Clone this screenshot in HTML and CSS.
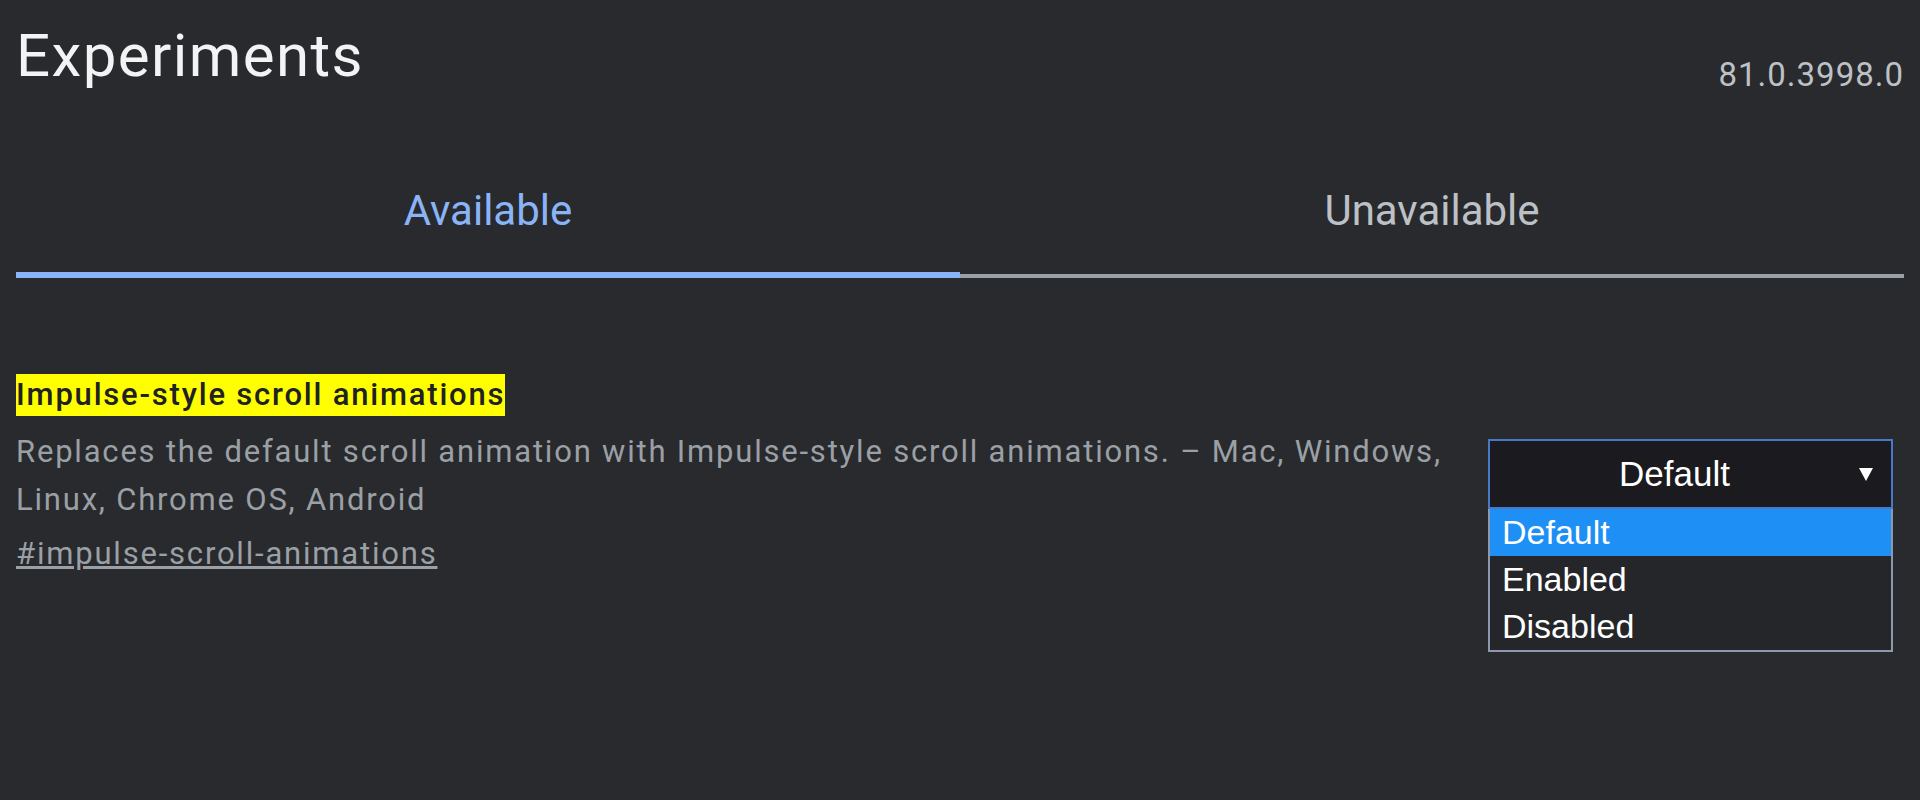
FILE: index.html
```html
<!DOCTYPE html>
<html lang="en">

<head>
    <meta charset="UTF-8">
    <meta name="viewport" content="width=device-width, initial-scale=1.0">
    <title>Experiments</title>
    <link rel="stylesheet" href="styles.css">
</head>

<body>

    <!-- Шапка -->
    <header class="header">
        <h1 class="title">Experiments</h1>
        <span class="version">81.0.3998.0</span>
    </header>

    <!-- Вкладки -->
    <nav class="tabs">
        <div class="tab tab-active">Available</div>
        <div class="tab">Unavailable</div>
    </nav>

    <!-- Эксперимент -->
    <div class="experiment">
        <div class="experiment-info">
            <h3 class="experiment-name"><span class="highlight">Impulse-style scroll animations</span></h3>
            <p class="experiment-desc">Replaces the default scroll animation with Impulse-style scroll animations. – Mac, Windows, Linux, Chrome OS, Android</p>
            <a class="experiment-link" href="#impulse-scroll-animations">#impulse-scroll-animations</a>
        </div>
        <div class="experiment-select">
            <div class="select-box">
                <span class="select-value">Default</span>
                <span class="select-arrow"></span>
            </div>
            <ul class="select-list">
                <li class="option option-selected">Default</li>
                <li class="option">Enabled</li>
                <li class="option">Disabled</li>
            </ul>
        </div>
    </div>

</body>

</html>
```

FILE: styles.css
```css
body {
    margin: 0;
    padding: 0 16px;
    background-color: #292a2d;
    font-family: 'Roboto', 'Liberation Sans', sans-serif;
    color: #e8eaed;
}

.header {
    display: flex;
    justify-content: space-between;
    align-items: flex-start;
    padding-top: 26px;
}

.title {
    margin: 0;
    font-size: 60px;
    font-weight: 400;
    line-height: 60px;
    letter-spacing: 1.4px;
    color: #f1f3f4;
}

.version {
    margin-top: 33px;
    font-size: 33px;
    line-height: 32px;
    letter-spacing: 1px;
    color: #bdc1c6;
}

.tabs {
    display: flex;
    align-items: flex-end;
}

.tab {
    flex: 1;
    text-align: center;
    font-size: 42px;
    line-height: 42px;
    padding: 99px 0 42px;
    color: #bdc1c6;
    border-bottom: 4px solid #9aa0a6;
}

.tab-active {
    color: #8ab4f8;
    padding-bottom: 40px;
    border-bottom: 6px solid #8ab4f8;
}

.experiment {
    display: flex;
    align-items: flex-start;
    margin-top: 96px;
}

.experiment-info {
    width: 1440px;
}

.experiment-name {
    margin: 0;
    font-size: 31px;
    font-weight: 500;
    line-height: 42px;
    letter-spacing: 1.8px;
}

.highlight {
    display: inline-block;
    background-color: #ffff00;
    color: #202124;
}

.experiment-desc {
    margin: 12px 0 0;
    font-size: 31px;
    line-height: 48px;
    letter-spacing: 1.8px;
    color: #9aa0a6;
}

.experiment-link {
    display: inline-block;
    margin-top: 6px;
    font-size: 31px;
    line-height: 48px;
    letter-spacing: 1.8px;
    color: #9aa0a6;
}

.experiment-select {
    width: 405px;
    margin: 65px 11px 0 auto;
    font-family: 'Liberation Sans', 'Arial', sans-serif;
}

.select-box {
    display: flex;
    align-items: center;
    height: 70px;
    box-sizing: border-box;
    border: 2px solid #4a78c8;
    background-color: #1b1b1f;
    color: #fff;
}

.select-value {
    flex: 1;
    text-align: center;
    font-size: 35px;
}

.select-arrow {
    width: 0;
    height: 0;
    margin-right: 18px;
    border-left: 7px solid transparent;
    border-right: 7px solid transparent;
    border-top: 13px solid #fff;
}

/* выпадающий список */
.select-list {
    margin: 0;
    padding: 0;
    list-style: none;
    border: 2px solid #8c98b0;
    border-top: none;
    background-color: #252629;
}

.option {
    height: 47px;
    line-height: 47px;
    padding-left: 12px;
    font-size: 34px;
    color: #fff;
}

.option-selected {
    background-color: #1e8ff5;
}
```
